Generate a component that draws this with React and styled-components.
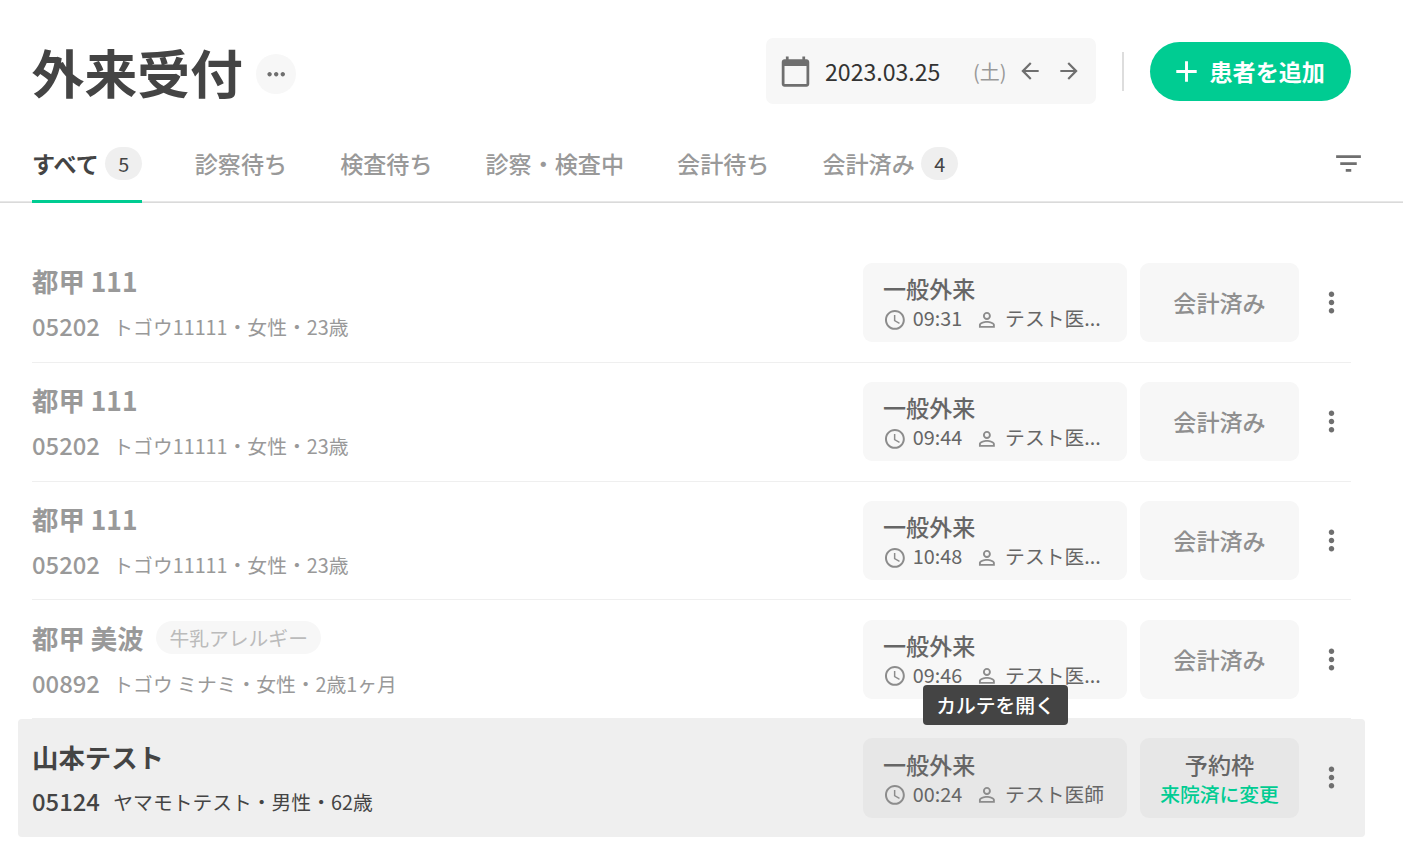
import styled, { createGlobalStyle } from 'styled-components';
import React, { useState } from 'react';
import {
  MdAccessTime,
  MdAdd,
  MdArrowBack,
  MdArrowForward,
  MdCalendarToday,
  MdFilterList,
  MdMoreHoriz,
  MdMoreVert,
  MdPersonOutline,
} from 'react-icons/md';

const tabs = [
  { id: 'all', label: 'すべて', count: 5 },
  { id: 'exam', label: '診察待ち' },
  { id: 'test', label: '検査待ち' },
  { id: 'doing', label: '診察・検査中' },
  { id: 'pay', label: '会計待ち' },
  { id: 'paid', label: '会計済み', count: 4 },
];

const patients = [
  { id: 1, name: '都甲 111', no: '05202', info: 'トゴウ11111・女性・23歳', time: '09:31', doctor: 'テスト医...', done: true },
  { id: 2, name: '都甲 111', no: '05202', info: 'トゴウ11111・女性・23歳', time: '09:44', doctor: 'テスト医...', done: true },
  { id: 3, name: '都甲 111', no: '05202', info: 'トゴウ11111・女性・23歳', time: '10:48', doctor: 'テスト医...', done: true },
  { id: 4, name: '都甲 美波', no: '00892', info: 'トゴウ ミナミ・女性・2歳1ヶ月', label: '牛乳アレルギー', time: '09:46', doctor: 'テスト医...', done: true },
  { id: 5, name: '山本テスト', no: '05124', info: 'ヤマモトテスト・男性・62歳', time: '00:24', doctor: 'テスト医師', done: false },
];

const PatientRow = ({ patient, active }) => {
  const { name, no, info, label, time, doctor, done } = patient;
  return (
    <Row $active={active}>
      <Patient $done={done}>
        <NameLine>
          <Name>{name}</Name>
          {label && <Label>{label}</Label>}
        </NameLine>
        <InfoLine>
          <Number>{no}</Number>
          <Info>{info}</Info>
        </InfoLine>
      </Patient>
      <Visit $active={active}>
        <CardTitle>一般外来</CardTitle>
        <VisitLine>
          <MdAccessTime />
          <Time>{time}</Time>
          <MdPersonOutline />
          <Doctor>{doctor}</Doctor>
        </VisitLine>
        {active && <Tooltip>カルテを開く</Tooltip>}
      </Visit>
      <Status $active={active}>
        {done ? (
          <Done>会計済み</Done>
        ) : (
          <>
            <CardTitle>予約枠</CardTitle>
            <Change>来院済に変更</Change>
          </>
        )}
      </Status>
      <More>
        <MdMoreVert />
      </More>
    </Row>
  );
};

const App = () => {
  const [tab, setTab] = useState('all');

  return (
    <Page>
      <GlobalStyle />
      <Header>
        <Title>外来受付</Title>
        <RoundButton>
          <MdMoreHoriz />
        </RoundButton>
        <DateBox>
          <CalendarIcon />
          <DateText>2023.03.25</DateText>
          <Weekday>(土)</Weekday>
          <Arrow>
            <MdArrowBack />
          </Arrow>
          <Arrow>
            <MdArrowForward />
          </Arrow>
        </DateBox>
        <Divider />
        <AddButton>
          <MdAdd />
          <span>患者を追加</span>
        </AddButton>
      </Header>
      <Tabs>
        {tabs.map((t) => (
          <Tab key={t.id} $active={t.id === tab} onClick={() => setTab(t.id)}>
            {t.label}
            {t.count && <Count>{t.count}</Count>}
          </Tab>
        ))}
        <Filter>
          <MdFilterList />
        </Filter>
      </Tabs>
      <List>
        {patients.map((p) => (
          <PatientRow key={p.id} patient={p} active={p.id === 5} />
        ))}
      </List>
    </Page>
  );
};
export default App;

const GlobalStyle = createGlobalStyle`
  * {
    box-sizing: border-box;
  }
  body {
    margin: 0;
    background: #fff;
    color: #444;
    font-family: 'Noto Sans CJK JP', sans-serif;
  }
  button {
    padding: 0;
    border: none;
    background: none;
    color: inherit;
    font: inherit;
    cursor: pointer;
  }
  svg {
    display: block;
    flex: none;
  }
`;

const Page = styled.div`
  height: 864px;
  overflow: hidden;
`;

const Header = styled.header`
  display: flex;
  align-items: center;
  height: 127px;
  padding: 15px 52px 0 32px;
`;

const Title = styled.h1`
  margin: 0 13.4px 0 -0.4px;
  font-size: 52.8px;
  font-weight: 700;
  line-height: 60px;
`;

const RoundButton = styled.button`
  display: flex;
  align-items: center;
  justify-content: center;
  width: 40px;
  height: 40px;
  margin: 6px auto 0 0;
  border-radius: 50%;
  background: #f7f7f7;
  color: #6f6f6f;
  font-size: 26.4px;
`;

const DateBox = styled.div`
  display: flex;
  align-items: center;
  width: 330px;
  height: 66px;
  padding-left: 13px;
  border-radius: 7px;
  background: #f7f7f7;
`;

const CalendarIcon = styled(MdCalendarToday)`
  color: #6f6f6f;
  font-size: 33px;
`;

const DateText = styled.span`
  width: 148px;
  margin-left: 13px;
  color: #333;
  font-size: 23.1px;
`;

const Weekday = styled.span`
  width: 44px;
  color: #999;
  font-size: 20px;
`;

const Arrow = styled.button`
  width: 26px;
  margin-right: 13px;
  color: #6f6f6f;
  font-size: 26px;
`;

const Divider = styled.div`
  width: 2px;
  height: 39px;
  margin: 0 26px;
  background: #ddd;
`;

const AddButton = styled.button`
  display: flex;
  align-items: center;
  gap: 5.5px;
  width: 201px;
  height: 59px;
  margin-top: 1px;
  padding-left: 19px;
  border-radius: 30px;
  background: #00cc92;
  color: #fff;
  font-size: 23.1px;
  font-weight: 700;
  white-space: nowrap;

  svg {
    font-size: 35px;
  }
  span {
    margin-top: -2px;
  }
`;

const Tabs = styled.nav`
  display: flex;
  gap: 53px;
  height: 76px;
  padding: 0 38px 0 32px;
  box-shadow: inset 0 -1px #dadada, inset 0 -2px #e7e7e7;
`;

const Tab = styled.button`
  display: flex;
  align-items: center;
  gap: 6px;
  height: 76px;
  padding-bottom: 2px;
  border-bottom: 3px solid ${(props) => (props.$active ? '#00cc92' : 'transparent')};
  color: ${(props) => (props.$active ? '#444' : '#999')};
  font-size: 23.1px;
  font-weight: ${(props) => (props.$active ? 700 : 500)};
  white-space: nowrap;
`;

const Count = styled.span`
  width: 37px;
  height: 33px;
  margin-top: 2px;
  padding-left: 1px;
  border-radius: 17px;
  background: #efefef;
  color: #444;
  font-size: 19.8px;
  font-weight: 400;
  line-height: 33px;
  text-align: center;
`;

const Filter = styled.button`
  margin: -3px 0 0 auto;
  color: #6f6f6f;
  font-size: 33px;
`;

const List = styled.div`
  padding: 41px 38px 0 18px;
`;

const Row = styled.div`
  display: flex;
  align-items: flex-start;
  height: ${(props) => (props.$active ? '118px' : '118.8px')};
  padding: 19.2px 14px 0;
  border-radius: 4px;
  background: ${(props) => (props.$active ? '#efefef' : 'linear-gradient(#efefef, #efefef) 14px 100% / calc(100% - 28px) 1px no-repeat')};
`;

const Patient = styled.div`
  flex: 1;
  color: ${(props) => (props.$done ? '#999' : '#444')};
`;

const NameLine = styled.div`
  display: flex;
  align-items: center;
  gap: 12.5px;
  height: 37px;
`;

const Name = styled.span`
  margin-top: -1.5px;
  font-size: 26.4px;
  font-weight: 700;
`;

const Label = styled.span`
  height: 33px;
  margin-top: -1px;
  padding: 0 13.4px;
  border-radius: 17px;
  background: #f7f7f7;
  color: #bbb;
  font-size: 19.8px;
  line-height: 33px;
`;

const InfoLine = styled.div`
  display: flex;
  gap: 13.5px;
  margin-top: 8px;
  line-height: 36px;
`;

const Number = styled.span`
  font-size: 23.8px;
  font-weight: 500;
`;

const Info = styled.span`
  margin-top: 1px;
  font-size: 19.8px;
`;

const Card = styled.div`
  height: 79.2px;
  border-radius: 9px;
  background: ${(props) => (props.$active ? '#e7e7e7' : '#f7f7f7')};
  color: #666;
  white-space: nowrap;
`;

const Visit = styled(Card)`
  position: relative;
  width: 264px;
  padding: 10.2px 0 0 20px;
`;

const CardTitle = styled.div`
  font-size: 23.1px;
  font-weight: 500;
  line-height: 30px;
`;

const VisitLine = styled.div`
  display: flex;
  align-items: center;
  height: 29px;
  font-size: 19.8px;

  svg {
    margin-top: 4px;
    color: #8c8c8c;
    font-size: 23.8px;
  }
`;

const Time = styled.span`
  width: 57px;
  margin: 0 5px 0 6px;
`;

const Doctor = styled.span`
  margin-left: 6.5px;
`;

const Status = styled(Card)`
  display: flex;
  flex-direction: column;
  align-items: center;
  width: 159px;
  margin-left: 13px;
  padding-top: 11px;
`;

const Done = styled.div`
  color: #8f8f8f;
  font-size: 23.1px;
  font-weight: 500;
  line-height: 56px;
`;

const Change = styled.div`
  color: #00cc92;
  font-size: 19.8px;
  font-weight: 500;
  line-height: 29px;
`;

const More = styled.button`
  width: 33px;
  height: 79px;
  margin: 0 3px 0 16px;
  color: #6f6f6f;
  font-size: 33px;
`;

const Tooltip = styled.div`
  position: absolute;
  top: -53px;
  left: 60px;
  width: 145px;
  height: 40px;
  border-radius: 4px;
  background: #444;
  color: #fff;
  font-size: 19.8px;
  font-weight: 500;
  line-height: 40px;
  text-align: center;
`;
